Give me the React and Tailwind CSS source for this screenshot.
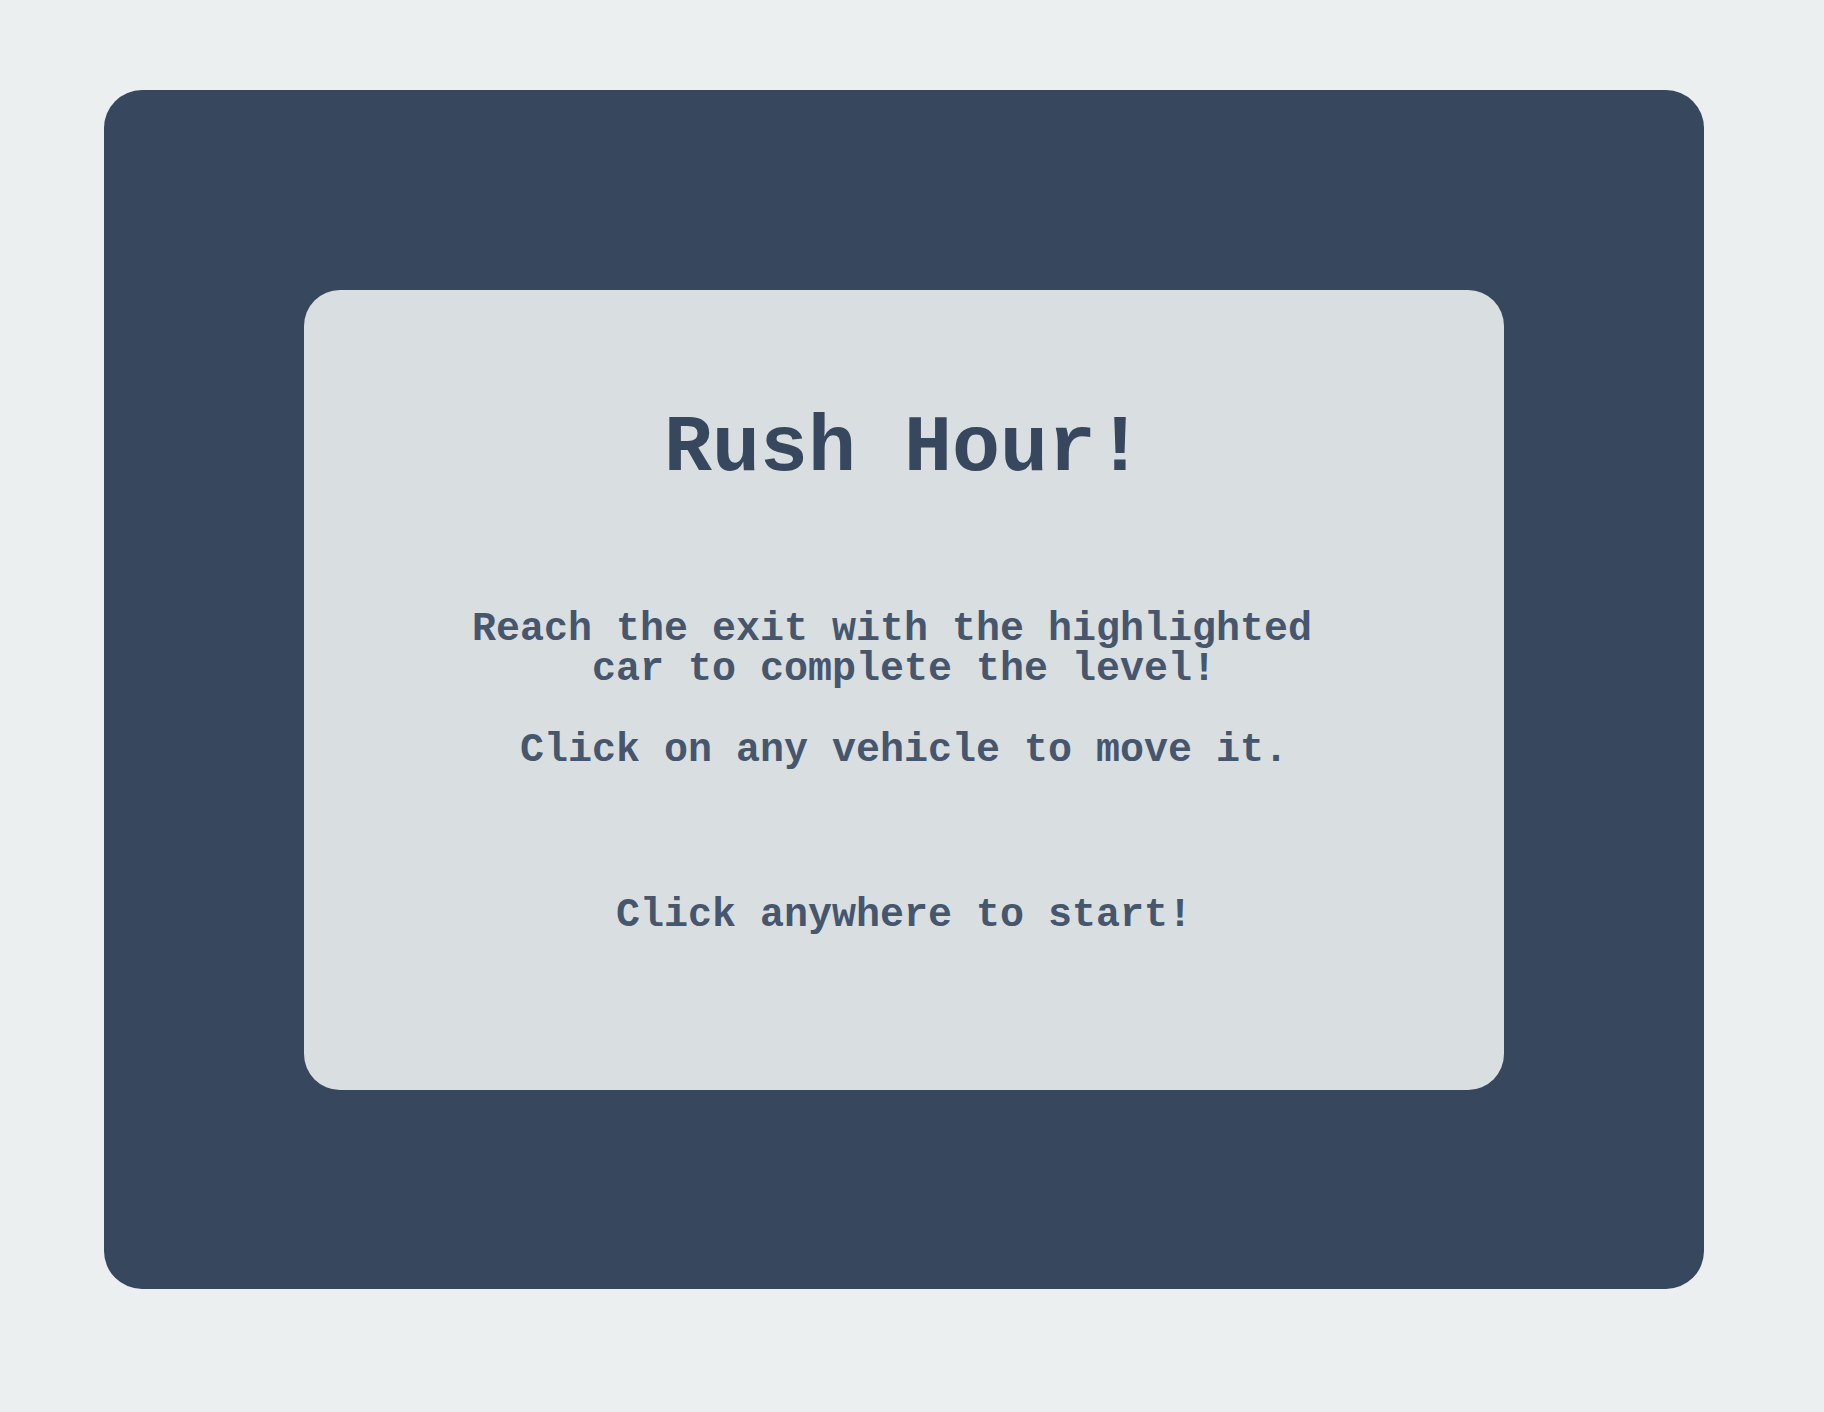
import React from 'react';

const mono = { fontFamily: '"Liberation Mono", "Courier New", monospace' };

const App = () => {
    return (
        <div className="min-h-[1412px] w-full bg-[#ebeff0] pl-[104px] pt-[90px]">
            <div className="flex h-[1199px] w-[1600px] items-center justify-center rounded-[38px] bg-[#37475e]">
                <div
                    className="flex h-[800px] w-[1200px] flex-col items-center rounded-[36px] bg-[#d9dee1] pt-[119px] text-center"
                    style={mono}
                >
                    <h1 className="text-[80px] font-bold leading-[80px] text-[#37475e]">
                        Rush Hour!
                    </h1>
                    <p className="mt-[121px] text-[40px] font-bold leading-[40px] text-[#46566c]">
                        Reach the exit with the highlighted{'\u00a0'}
                        <br />
                        car to complete the level!
                    </p>
                    <p className="mt-[41px] text-[40px] font-bold leading-[40px] text-[#46566c]">
                        Click on any vehicle to move it.
                    </p>
                    <p className="mt-[125px] text-[40px] font-bold leading-[40px] text-[#46566c]">
                        Click anywhere to start!
                    </p>
                </div>
            </div>
        </div>
    );
};

export default App;
